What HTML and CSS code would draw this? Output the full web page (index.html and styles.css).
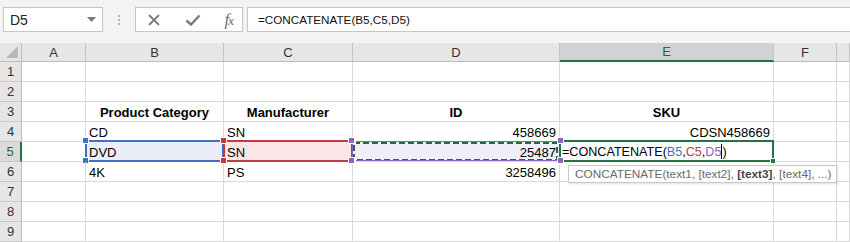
FILE: index.html
```html
<!DOCTYPE html>
<html>
<head>
<meta charset="utf-8">
<link rel="stylesheet" href="styles.css">
</head>
<body>
<div class="app">
  <div class="topbar">
    <div class="namebox">
      <span class="ref">D5</span>
      <svg class="dd" width="9" height="5" viewBox="0 0 9 5"><path d="M0 0H9L4.5 5Z" fill="#7a7a7a"/></svg>
    </div>
    <div class="grip"><i></i><i></i><i></i></div>
    <div class="fbtns">
      <svg width="14" height="14" viewBox="0 0 14 14"><path d="M2 2L12 12M12 2L2 12" stroke="#7b7b7b" stroke-width="1.8"/></svg>
      <svg width="16" height="14" viewBox="0 0 16 14"><path d="M1.5 7.5L6 11.5L14.5 2.5" stroke="#7b7b7b" stroke-width="2.4" fill="none"/></svg>
      <span class="fx">f<small>x</small></span>
    </div>
    <div class="formula">=CONCATENATE(B5,C5,D5)</div>
  </div>
  <div class="sheet">
    <div class="corner"><svg width="12" height="12" viewBox="0 0 12 12"><path d="M12 0V12H0Z" fill="#b9b9b9"/></svg></div>
    <div class="ch">A</div><div class="ch">B</div><div class="ch">C</div><div class="ch">D</div><div class="ch sel">E</div><div class="ch">F</div><div class="ch"></div>

    <div class="rh">1</div><div class="c"></div><div class="c"></div><div class="c"></div><div class="c"></div><div class="c"></div><div class="c"></div><div class="c"></div>
    <div class="rh">2</div><div class="c"></div><div class="c"></div><div class="c"></div><div class="c"></div><div class="c"></div><div class="c"></div><div class="c"></div>
    <div class="rh">3</div><div class="c"></div><div class="c b ctr">Product Category</div><div class="c b ctr">Manufacturer</div><div class="c b ctr">ID</div><div class="c b ctr">SKU</div><div class="c"></div><div class="c"></div>
    <div class="rh">4</div><div class="c"></div><div class="c">CD</div><div class="c">SN</div><div class="c num">458669</div><div class="c num">CDSN458669</div><div class="c"></div><div class="c"></div>
    <div class="rh rsel">5</div><div class="c"></div>
    <div class="c hb">DVD<span class="frame"><i class="h tl"></i><i class="h tr"></i><i class="h bl"></i><i class="h br"></i></span></div>
    <div class="c hr">SN<span class="frame"><i class="h tl"></i><i class="h tr"></i><i class="h bl"></i><i class="h br"></i></span></div>
    <div class="c num hp">25487<span class="frame"><svg class="ants" preserveAspectRatio="none"><rect x="1" y="1" width="203" height="17" fill="none" stroke="#1f6b42" stroke-width="2" stroke-dasharray="6 3"/></svg><i class="h tl"></i><i class="h tr"></i><i class="h bl"></i><i class="h br"></i></span></div>
    <div class="c active"><span class="edit">=CONCATENATE(<b class="cb">B5</b>,<b class="cr">C5</b>,<b class="cp">D5</b><i class="caret"></i>)</span><span class="aframe"><i class="fill"></i></span>
      <div class="tip">CONCATENATE(text1, [text2], <b>[text3]</b>, [text4], ...)</div>
    </div>
    <div class="c"></div><div class="c"></div>
    <div class="rh">6</div><div class="c"></div><div class="c">4K</div><div class="c">PS</div><div class="c num">3258496</div><div class="c"></div><div class="c"></div><div class="c"></div>
    <div class="rh">7</div><div class="c"></div><div class="c"></div><div class="c"></div><div class="c"></div><div class="c"></div><div class="c"></div><div class="c"></div>
    <div class="rh">8</div><div class="c"></div><div class="c"></div><div class="c"></div><div class="c"></div><div class="c"></div><div class="c"></div><div class="c"></div>
    <div class="rh">9</div><div class="c"></div><div class="c"></div><div class="c"></div><div class="c"></div><div class="c"></div><div class="c"></div><div class="c"></div>
  </div>
</div>
</body>
</html>
```
FILE: styles.css
```css
* { box-sizing: border-box; }
html, body { margin: 0; padding: 0; background: #fff; }
body { width: 850px; height: 242px; overflow: hidden; font-family: "Liberation Sans", Arial, sans-serif; color: #000; }

.app { display: flex; flex-direction: column; }

.topbar {
  height: 43px;
  background: #f3f3f3;
  display: flex;
  align-items: flex-start;
  padding: 7px 0 0 3px;
}
.namebox {
  width: 100px; height: 25px;
  background: #fff;
  border: 1px solid #c6c6c6;
  display: flex; align-items: center; justify-content: space-between;
  padding: 0 6px 0 6px;
  font-size: 14px; color: #222;
}
.namebox .dd { margin-top: -1px; }
.grip {
  width: 32px; height: 25px;
  display: flex; flex-direction: column; align-items: center; justify-content: center; gap: 2px;
}
.grip i { display: block; width: 2px; height: 2px; background: #b5b5b5; }
.fbtns {
  width: 108px; height: 25px;
  background: #fff;
  border: 1px solid #c6c6c6;
  display: flex; align-items: center; justify-content: space-between;
  padding: 0 9px 0 11px;
}
.fx {
  font-family: "Liberation Serif", "Times New Roman", serif;
  font-style: italic; font-size: 17px; color: #6e6e6e; letter-spacing: -1px;
  line-height: 17px;
}
.fx small { font-size: 13px; }
.formula {
  flex: 1; height: 25px; margin-left: 4px;
  background: #fff;
  border: 1px solid #c6c6c6; border-right: 0;
  display: flex; align-items: center;
  padding-left: 10px;
  font-size: 11.7px; color: #111;
}

.sheet {
  display: grid;
  grid-template-columns: 22px 64px 138px 129px 207px 214px 63px 13px;
  grid-template-rows: 19px repeat(9, 20px);
  font-size: 13px;
}
.corner {
  background: #e6e6e6;
  border-right: 1px solid #bdbdbd; border-bottom: 1px solid #bdbdbd;
  display: flex; align-items: flex-end; justify-content: flex-end;
  padding: 0 3px 3px 0;
}
.ch {
  background: #e6e6e6;
  border-right: 1px solid #c3c3c3; border-bottom: 1px solid #bdbdbd;
  display: flex; align-items: center; justify-content: center;
  color: #333; font-size: 13px;
}
.ch.sel { background: #d2d2d2; color: #1d6b41; border-bottom: 2px solid #217346; }
.rh {
  background: #e6e6e6;
  border-right: 1px solid #bdbdbd; border-bottom: 1px solid #c9c9c9;
  display: flex; align-items: center; justify-content: center;
  color: #333; font-size: 13px;
}
.rh.rsel { background: #dadada; color: #1d6b41; border-right: 2px solid #217346; }
.c {
  position: relative;
  border-right: 1px solid #d9d9d9; border-bottom: 1px solid #d9d9d9;
  display: flex; align-items: flex-end;
  padding: 0 3px 1px 3px;
  white-space: nowrap;
  line-height: 15px;
}
.c.b { font-weight: bold; }
.c.ctr { justify-content: center; }
.c.num { justify-content: flex-end; }

.frame {
  position: absolute; left: -1px; top: -2px; right: -1px; bottom: -1px;
  border: 2px solid;
  pointer-events: none;
}
.hb { background: #e9eef8; }
.hb .frame { border-color: #3f6fc6; }
.hb .h { background: #3f6fc6; }
.hr { background: #fbe6e7; }
.hr .frame { border-color: #c33a40; }
.hr .h { background: #c33a40; z-index: 3; }
.hp { background: #f0eef8; }
.hp .frame { border: 1px solid #8c62c4; left: -1px; top: -1px; right: -1px; bottom: 0; }
.hp .h { background: #8c62c4; z-index: 3; }
.ants { position: absolute; left: 0; top: 0; width: 100%; height: 100%; }

.h { position: absolute; width: 7px; height: 7px; border: 1px solid #fff; display: block; }
.h.tl { left: -5px; top: -5px; }
.h.tr { right: -5px; top: -5px; }
.h.bl { left: -5px; bottom: -4px; }
.h.br { right: -5px; bottom: -4px; }

.active { padding-left: 2px; z-index: 2; overflow: visible; }
.edit { font-size: 12.6px; }
.cb { font-weight: normal; color: #3f6fc6; }
.cr { font-weight: normal; color: #c33a40; }
.cp { font-weight: normal; color: #8c62c4; }
.caret { display: inline-block; width: 1px; height: 15px; background: #000; vertical-align: -3px; }
.aframe {
  position: absolute; left: -1px; top: -2px; right: -1px; bottom: -1px;
  border: 2px solid #217346;
}
.fill {
  position: absolute; right: -4px; bottom: -4px;
  width: 6px; height: 6px; background: #217346; border: 1px solid #fff; display: block;
}
.tip {
  position: absolute; left: 8px; top: 23px;
  width: 269px; height: 18px;
  background: #fff;
  border: 1px solid #c8c8c8;
  box-shadow: 1px 1px 2px rgba(0,0,0,0.12);
  font-size: 11.8px; color: #6a6a6a;
  padding: 0 0 0 6px;
  line-height: 16px;
  white-space: nowrap;
  z-index: 5;
}
.tip b { color: #444; }
```
